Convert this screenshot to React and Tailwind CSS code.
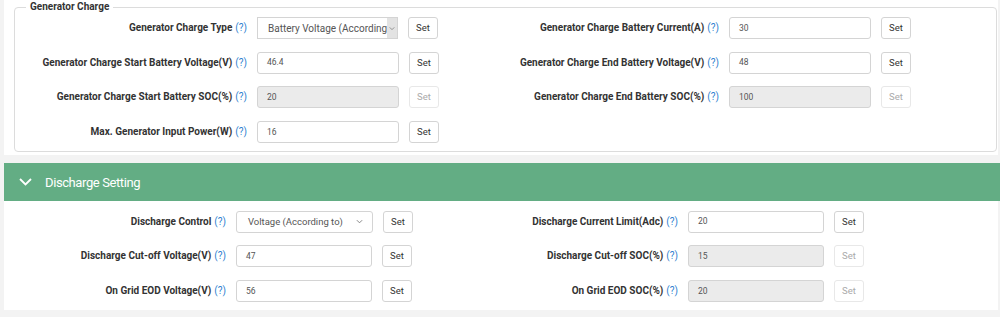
import React from "react";

const FONT = { fontFamily: 'Roboto, "Noto Sans", Arial, sans-serif' };

function Q() {
  return <span className="ml-[3px] font-normal text-[#2f7fd0]">(?)</span>;
}

function Label({ text, w }) {
  return (
    <div className={`${w} shrink-0 text-right text-[10px] font-bold text-[#333] leading-[22px] whitespace-nowrap`}>
      {text}
      <Q />
    </div>
  );
}

function SetBtn({ disabled }) {
  return (
    <div
      className={`ml-[10px] flex h-[22px] w-[30px] shrink-0 items-center justify-center rounded-[3px] border text-[9.5px] ${
        disabled ? "border-[#e8e8e8] text-[#aaa]" : "border-[#d4d4d4] text-[#333]"
      }`}
    >
      Set
    </div>
  );
}

function Input({ value, disabled, w }) {
  return (
    <div
      className={`ml-[10px] flex h-[22px] ${w} shrink-0 items-center rounded-[3px] border border-[#d4d4d4] pl-[9px] text-[8.5px] text-[#555] ${
        disabled ? "bg-[#ebebeb]" : "bg-white"
      }`}
    >
      {value}
    </div>
  );
}

function Row({ label, value, disabled, lw, iw }) {
  return (
    <div className="flex items-center">
      <Label text={label} w={lw} />
      <Input value={value} disabled={disabled} w={iw} />
      <SetBtn disabled={disabled} />
    </div>
  );
}

function Chevron({ className }) {
  return (
    <svg className={className} width="8" height="5" viewBox="0 0 8 5" fill="none">
      <path d="M1 1l3 3 3-3" stroke="#777" strokeWidth="1" />
    </svg>
  );
}

export default function App() {
  return (
    <div className="h-[317px] w-[1000px] overflow-hidden bg-[#f3f3f3]" style={FONT}>
      {/* Generator charge panel */}
      <div className="ml-[4px] mr-[2px] h-[155px] bg-white pt-[7px]">
        <div className="relative ml-[10px] mr-[1px] h-[145px] rounded-[4px] border border-[#dcdcdc]">
          <div className="absolute left-[11px] top-[-8px] bg-white px-[4px] text-[10px] font-bold leading-[14px] text-[#333]">
            Generator Charge
          </div>
          <div className="grid grid-cols-[472px_472px] gap-y-[12.7px] pt-[9px]">
            <div className="flex items-center">
              <Label text="Generator Charge Type" w="w-[232px]" />
              <div className="ml-[10px] flex h-[22px] w-[141px] shrink-0 items-center border border-[#d4d4d4] bg-white text-[10px] text-[#555]">
                <div className="flex-1 overflow-hidden whitespace-nowrap pl-[10px]">Battery Voltage (According to)</div>
                <div className="flex h-full w-[10px] shrink-0 items-center justify-center bg-[#e3e3e3]">
                  <Chevron className="w-[6px]" />
                </div>
              </div>
              <SetBtn />
            </div>
            <Row label="Generator Charge Battery Current(A)" value="30" lw="w-[232px]" iw="w-[142px]" />
            <Row label="Generator Charge Start Battery Voltage(V)" value="46.4" lw="w-[232px]" iw="w-[142px]" />
            <Row label="Generator Charge End Battery Voltage(V)" value="48" lw="w-[232px]" iw="w-[142px]" />
            <Row label="Generator Charge Start Battery SOC(%)" value="20" disabled lw="w-[232px]" iw="w-[142px]" />
            <Row label="Generator Charge End Battery SOC(%)" value="100" disabled lw="w-[232px]" iw="w-[142px]" />
            <Row label="Max. Generator Input Power(W)" value="16" lw="w-[232px]" iw="w-[142px]" />
          </div>
        </div>
      </div>

      {/* Discharge setting header */}
      <div className="ml-[4px] mt-[8px] flex h-[38px] items-center bg-[#63ad84] text-white">
        <svg className="ml-[15px]" width="13" height="8" viewBox="0 0 13 8" fill="none">
          <path d="M1 1l5.5 5.5L12 1" stroke="white" strokeWidth="1.8" />
        </svg>
        <span className="ml-[13px] text-[13px] leading-none tracking-[-0.4px]">Discharge Setting</span>
      </div>

      {/* Discharge body */}
      <div className="ml-[4px] mr-[2px] h-[109px] bg-white pt-[9.7px]">
        <div className="grid grid-cols-[452px_452px] gap-y-[12.7px]">
          <div className="flex items-center">
            <Label text="Discharge Control" w="w-[222px]" />
            <div className="ml-[10px] flex h-[22px] w-[137px] shrink-0 items-center rounded-[3px] border border-[#d4d4d4] bg-white text-[9.5px] text-[#555]">
              <div className="flex-1 whitespace-nowrap pl-[11px]">Voltage (According to)</div>
              <Chevron className="mr-[9px] w-[7px]" />
            </div>
            <SetBtn />
          </div>
          <Row label="Discharge Current Limit(Adc)" value="20" lw="w-[222px]" iw="w-[136px]" />
          <Row label="Discharge Cut-off Voltage(V)" value="47" lw="w-[222px]" iw="w-[136px]" />
          <Row label="Discharge Cut-off SOC(%)" value="15" disabled lw="w-[222px]" iw="w-[136px]" />
          <Row label="On Grid EOD Voltage(V)" value="56" lw="w-[222px]" iw="w-[136px]" />
          <Row label="On Grid EOD SOC(%)" value="20" disabled lw="w-[222px]" iw="w-[136px]" />
        </div>
      </div>
    </div>
  );
}
